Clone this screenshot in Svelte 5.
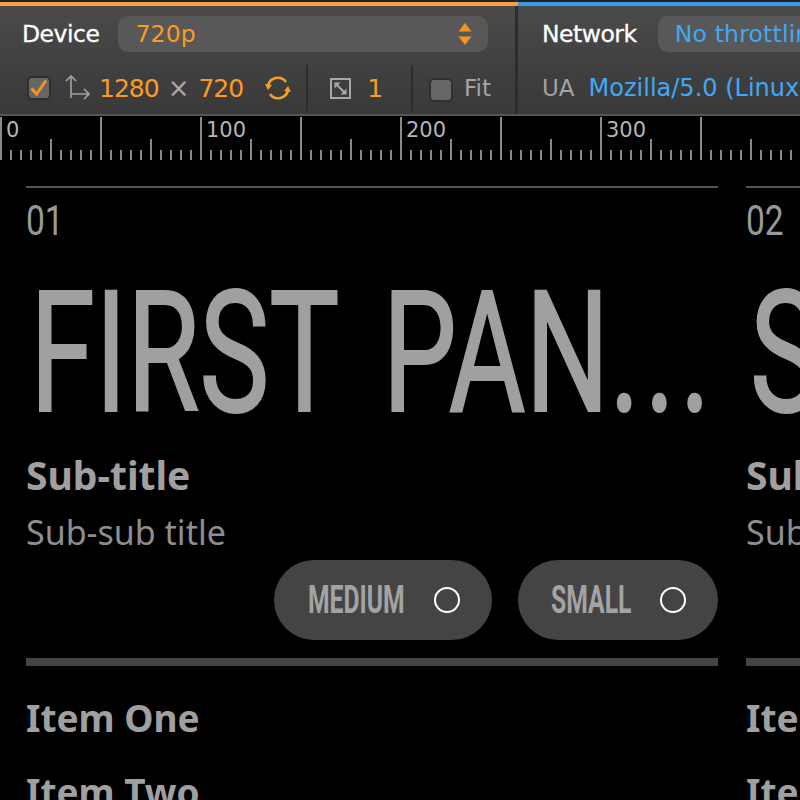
<script lang="ts">
  // ruler ticks: one every 10px, stronger every 50 and 100
  const ticks = Array.from({ length: 81 }, (_, i) => i);
  const labels = [0, 100, 200, 300];

  const panels = [
    { num: '01', title: 'FIRST PAN', sub: 'Sub-title', subsub: 'Sub-sub title' },
    { num: '02', title: 'SECOND P', sub: 'Sub-title', subsub: 'Sub-sub title' }
  ];
  const sizes = ['MEDIUM', 'SMALL'];
  const items = ['Item One', 'Item Two'];
</script>

<div class="page">
  <header class="toolbar">
    <section class="group device">
      <div class="row top">
        <span class="name">Device</span>
        <div class="select orange">
          <span>720p</span>
          <svg class="updown" width="14" height="24" viewBox="0 0 14 24">
            <path d="M7 1l6.5 8.5H.5zM7 23l6.5-8.5H.5z" fill="#f7931e" />
          </svg>
        </div>
      </div>
      <div class="row bottom">
        <span class="check on">
          <svg width="20" height="20" viewBox="0 0 20 20">
            <path d="M2.5 10.5l5 5.5L17 2.5" fill="none" stroke="#f7931e" stroke-width="3" />
          </svg>
        </span>
        <svg class="swap" width="26" height="26" viewBox="0 0 26 26">
          <path d="M7 24V2M2 7l5-5 5 5M7 20h18M20 15l5 5-5 5" transform="translate(0 -1)" fill="none" stroke="#a3a3a3" stroke-width="1.6" />
        </svg>
        <span class="orange dim">1280</span>
        <span class="times">×</span>
        <span class="orange dim">720</span>
        <svg class="rotate" width="26" height="26" viewBox="0 0 26 26">
          <path d="M3 11a10 10 0 0 1 18-4M23 15a10 10 0 0 1-18 4" fill="none" stroke="#f7a01e" stroke-width="2.6" />
          <path d="M0 9l7 1-4 5zM26 17l-7-1 4-5z" fill="#f7a01e" />
        </svg>
        <span class="sep"></span>
        <svg class="scale" width="21" height="21" viewBox="0 0 21 21">
          <rect x="1" y="1" width="19" height="19" fill="none" stroke="#a8a8a8" stroke-width="2" />
          <path d="M6 6l9 9" stroke="#a8a8a8" stroke-width="2" />
          <path d="M4.5 4.5h6l-6 6zM16.5 16.5h-6l6-6z" fill="#a8a8a8" />
        </svg>
        <span class="orange one">1</span>
        <span class="sep"></span>
        <span class="check"></span>
        <span class="label fit">Fit</span>
      </div>
    </section>
    <section class="group network">
      <div class="row top">
        <span class="name">Network</span>
        <div class="select blue"><span>No throttling</span></div>
      </div>
      <div class="row bottom">
        <span class="label">UA</span>
        <span class="blue ua">Mozilla/5.0 (Linux; Android 6.0)</span>
      </div>
    </section>
  </header>

  <div class="ruler">
    {#each ticks as t}
      <span class="tick" class:mid={t % 5 === 0} class:major={t % 10 === 0}></span>
    {/each}
    <div class="labels">
      {#each labels as l}
        <span>{l}</span>
      {/each}
    </div>
  </div>

  <main class="panels">
    {#each panels as panel}
      <article class="panel">
        <div class="head"><span>{panel.num}</span></div>
        <h1><span>{panel.title}<b>...</b></span></h1>
        <h2>{panel.sub}</h2>
        <h3>{panel.subsub}</h3>
        <div class="pills">
          {#each sizes as size}
            <div class="pill" class:small={size === 'SMALL'}>
              <span>{size}</span>
              <i class="ring"></i>
            </div>
          {/each}
        </div>
        <ul>
          {#each items as item}
            <li>{item}</li>
          {/each}
        </ul>
      </article>
    {/each}
  </main>
</div>

<style>
  :global(body) {
    background: #000;
  }
  .page {
    width: 800px;
    height: 800px;
    overflow: hidden;
    background: #000;
    font-family: 'DejaVu Sans', sans-serif;
  }

  /* Toolbar */
  .toolbar {
    display: flex;
    height: 116px;
    box-sizing: border-box;
    border-bottom: 2px solid #555;
    background: linear-gradient(#4b4b4b, #393939);
  }
  .group {
    box-sizing: border-box;
    padding-top: 2px;
    height: 114px;
    background: linear-gradient(#222 2px, transparent 2px);
  }
  .device {
    flex: none;
    width: 518px;
    border-right: 3px solid #2c2c2c;
    padding-left: 22px;
  }
  .network {
    flex: none;
    width: 600px;
    padding-left: 24px;
  }
  .device::before,
  .network::before {
    content: '';
    display: block;
    height: 4px;
    margin-bottom: 10px;
  }
  .device::before {
    background: #f7a041;
    margin-left: -22px;
    margin-right: -3px;
  }
  .network::before {
    background: #3d9be9;
    margin-left: -24px;
  }
  .row {
    display: flex;
    align-items: center;
  }
  .top {
    height: 36px;
  }
  .bottom {
    height: 48px;
    margin-top: 12px;
  }
  .name {
    color: #fff;
    font-size: 23.5px;
    letter-spacing: -0.5px;
    -webkit-text-stroke: 0.3px #fff;
    margin-right: 19px;
  }
  .network .name {
    margin-right: 21px;
  }
  .select {
    display: flex;
    align-items: center;
    justify-content: space-between;
    box-sizing: border-box;
    height: 36px;
    border-radius: 10px;
    background: #585858;
    padding: 0 16px 0 17px;
    font-size: 23.5px;
    letter-spacing: 0.2px;
  }
  .device .select {
    width: 370px;
  }
  .network .select {
    width: 300px;
  }
  .orange {
    color: #fb9a25;
  }
  .blue {
    color: #3fa9f5;
  }
  .check {
    flex: none;
    display: flex;
    align-items: center;
    justify-content: center;
    box-sizing: border-box;
    width: 24px;
    height: 24px;
    border: 2px solid #2f2f2f;
    border-radius: 5px;
    background: #666;
  }
  .check.on {
    margin-left: 5px;
  }
  .swap {
    margin-left: 13px;
  }
  .dim {
    font-size: 25px;
    letter-spacing: -1px;
  }
  .swap + .dim {
    margin-left: 9px;
  }
  .times {
    color: #a8a8a8;
    font-size: 26px;
    margin: 0 9px;
  }
  .rotate {
    margin-left: 22px;
  }
  .sep {
    width: 2px;
    height: 46px;
    background: #2c2c2c;
    margin-left: 15px;
  }
  .scale {
    margin-left: 22px;
  }
  .one {
    font-size: 25px;
    margin-left: 16px;
  }
  .one + .sep {
    margin-left: 28px;
  }
  .one + .sep + .check {
    margin-left: 16px;
    margin-top: 3px;
  }
  .label {
    color: #a3a3a3;
    font-size: 23px;
  }
  .fit {
    margin-left: 11px;
  }
  .ua {
    font-size: 24px;
    margin-left: 14px;
    white-space: nowrap;
  }

  /* Ruler */
  .ruler {
    position: relative;
    display: flex;
    align-items: flex-end;
    height: 44px;
    background: #000;
  }
  .tick {
    flex: none;
    width: 10px;
    height: 10px;
    box-sizing: border-box;
    border-left: 2px solid #8a8a8a;
  }
  .tick.mid {
    height: 21px;
  }
  .tick.major {
    height: 43px;
  }
  .labels {
    position: absolute;
    left: 6px;
    top: 0;
    display: flex;
    color: #b5b5b5;
    font-size: 21px;
    line-height: 28px;
  }
  .labels span {
    width: 200px;
  }

  /* Panels: the DIN-like face isn't installed, so Roboto is squeezed horizontally */
  .panels {
    display: flex;
    gap: 28px;
    padding-left: 26px;
  }
  .panel {
    flex: none;
    width: 692px;
    margin-top: 26px;
    color: #a0a0a0;
  }
  .head {
    border-top: 2px solid #555;
    padding-top: 10px;
    font-family: Roboto, sans-serif;
    font-size: 43px;
    line-height: 44px;
    color: #999;
  }
  .head span {
    display: block;
    transform: scaleX(0.78);
    transform-origin: left;
  }
  h1 {
    margin: 27px 0 0;
    font-family: Roboto, sans-serif;
    font-weight: 400;
    font-size: 168px;
    line-height: 170px;
    white-space: nowrap;
    color: #a0a0a0;
    padding-left: 4px;
  }
  h1 span {
    display: block;
    transform: scaleX(0.7);
    transform-origin: left;
    word-spacing: 23px;
    -webkit-text-stroke: 2px #a0a0a0;
  }
  h1 b {
    font-weight: 400;
    letter-spacing: 6px;
  }
  h2 {
    margin: 14px 0 0;
    font-family: 'Noto Sans', sans-serif;
    font-size: 39px;
    line-height: 44px;
    font-weight: 700;
  }
  h3 {
    margin: 15px 0 0;
    font-family: 'Noto Sans', sans-serif;
    font-size: 34px;
    line-height: 40px;
    font-weight: 400;
    color: #8e8e8e;
  }
  .pills {
    display: flex;
    justify-content: flex-end;
    gap: 26px;
    margin-top: 8px;
  }
  .pill {
    display: flex;
    align-items: center;
    box-sizing: border-box;
    height: 80px;
    width: 218px;
    border-radius: 40px;
    background: #444;
    padding: 0 32px 0 34px;
    font-family: Roboto, sans-serif;
    font-weight: 700;
    font-size: 38px;
    color: #a3a3a3;
  }
  .pill.small {
    width: 200px;
    padding-left: 33px;
  }
  .pill span {
    flex: 1;
    min-width: 0;
    white-space: nowrap;
    transform: scaleX(0.65);
    transform-origin: left;
  }
  .ring {
    display: block;
    flex: none;
    box-sizing: border-box;
    width: 26px;
    height: 26px;
    border: 2px solid #fff;
    border-radius: 50%;
  }
  ul {
    list-style: none;
    margin: 18px 0 0;
    padding: 28px 0 0;
    border-top: 8px solid #444;
  }
  li {
    font-family: 'Noto Sans', sans-serif;
    font-weight: 700;
    font-size: 37px;
    line-height: 48px;
    margin-bottom: 26px;
  }
</style>
